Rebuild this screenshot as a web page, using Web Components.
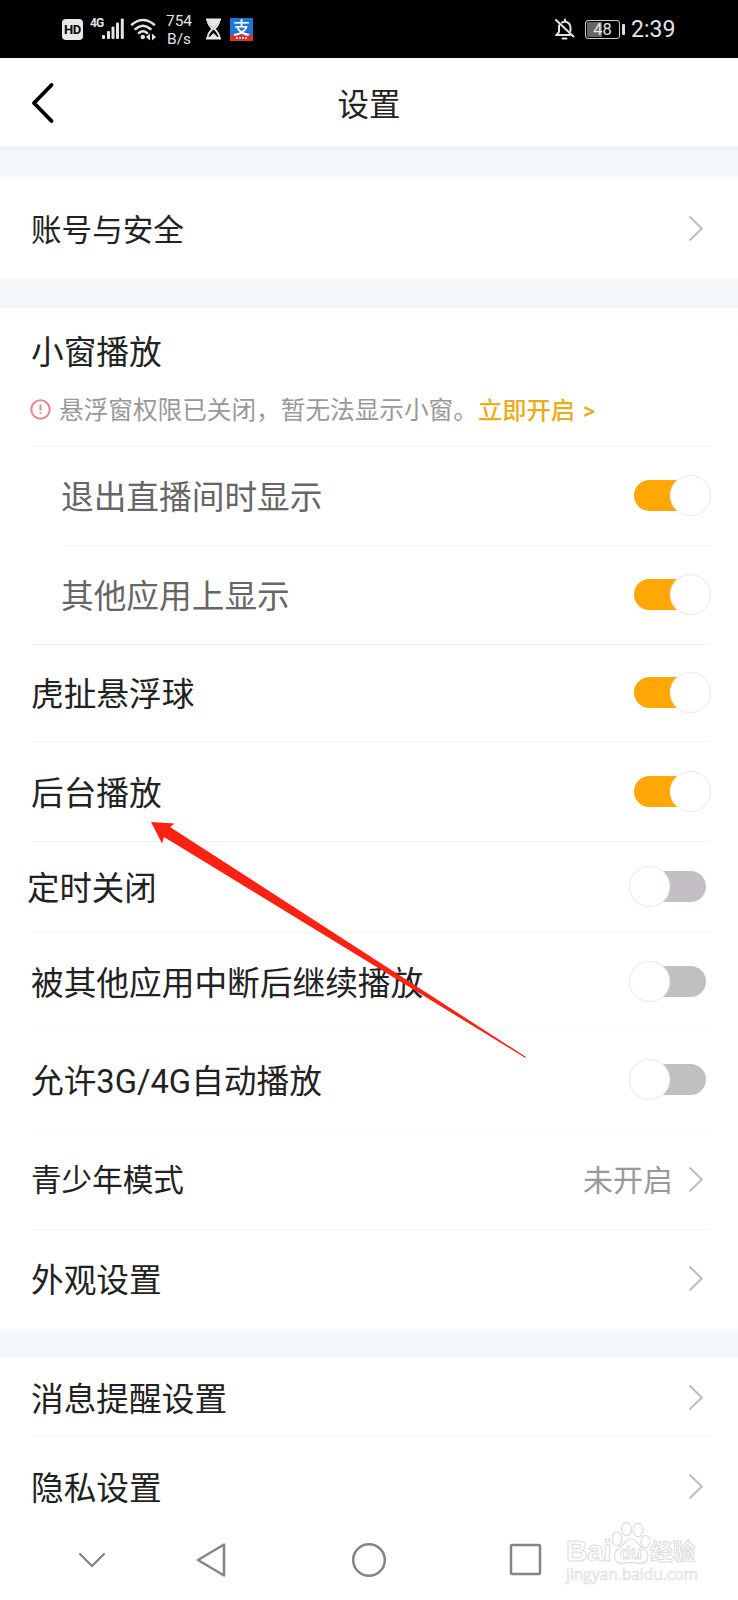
<!DOCTYPE html>
<html lang="zh-CN">
<head>
<meta charset="utf-8">
<title>设置</title>
<style>
html,body{margin:0;padding:0;background:#fff}
body{width:738px;height:1600px;overflow:hidden;font-family:Roboto,"Noto Sans CJK SC",sans-serif;color:#222}
</style>
</head>
<body>
<settings-screen></settings-screen>
<script>
const define = (name, html) => {
  const t = document.createElement('template');
  t.innerHTML = html;
  customElements.define(name, class extends HTMLElement {
    constructor() {
      super();
      this.attachShadow({mode: 'open'}).appendChild(t.content.cloneNode(true));
    }
  });
};

define('status-bar', `
<style>
:host{display:flex;align-items:center;height:58px;box-sizing:border-box;background:#000;color:#e4e4e4;padding:0 61px 0 62px}
svg{display:block;flex:none}
.hd{width:21px;height:21px;border-radius:4px;background:#e8e8e8;color:#000;font:700 13px/21px Roboto,sans-serif;text-align:center;letter-spacing:-.3px}
.net{display:flex;align-items:flex-start;margin-left:7px;height:22px}
.g{font:700 12px/11px "Liberation Sans Narrow",Roboto,sans-serif;width:12px;display:block;letter-spacing:-1px}
.rate{margin-left:8px;font:400 15.500px/18px Roboto,sans-serif;width:28px;text-align:center;padding-top:1px}
.rate div{height:18px;white-space:nowrap}
.sp{flex:1}
.pay{width:23px;height:23px;margin-left:8px;background:linear-gradient(#1b77d8 0 17px,#d8332f 17px);color:#fff;text-align:center}
.pay b{display:block;font:500 17px/17px "Noto Sans CJK SC",sans-serif;height:17px}
.pay i{display:block;width:11px;height:2px;margin:2px auto 0;background:repeating-linear-gradient(90deg,#f5c8c6 0 2px,#d8332f 2px 3px)}
.bat{display:flex;align-items:center;margin-left:10px}
.cell{width:33px;height:17px;border:1px solid #cfcfcf;border-radius:3px;box-shadow:inset 0 0 0 1px #000;background:linear-gradient(90deg,#666 0 16px,#000 16px);font:400 16.500px/17px Roboto,sans-serif;text-align:center}
.nub{width:3px;height:11px;background:#ddd;border-radius:1px;margin-left:2px}
.time{font:400 23px/30px Roboto,sans-serif;margin-left:6px;width:46px;white-space:nowrap;padding-top:2px}
</style>
<div class="hd">HD</div>
<div class="net"><span class="g">4G</span>
<svg width="22" height="22" viewBox="0 0 22 22" fill="#e4e4e4"><rect x="0" y="17" width="3" height="4" rx="1"/><rect x="5" y="13" width="3" height="8" rx="1"/><rect x="9.5" y="8.500" width="3" height="12.500" rx="1"/><rect x="14" y="4.500" width="3" height="16.500" rx="1"/><rect x="18.800" y="0.500" width="3" height="20.500" rx="1"/></svg></div>
<svg width="27" height="24" viewBox="0 0 27 24" style="margin-left:6px" fill="none" stroke="#e4e4e4" stroke-width="2.500" stroke-linecap="round"><path d="M2 7.500Q13 -1.500 24 7.500M5.500 12Q13 5.500 20.500 12M9 16Q13 12.500 17 16"/><circle cx="12.800" cy="20" r="2.200" fill="#e4e4e4" stroke="none"/><path d="M20 16.500v7l-4-3.500zM22 16.500v7l4-3.500z" fill="#e4e4e4" stroke="none"/></svg>
<div class="rate"><div>754</div><div>B/s</div></div>
<svg width="17" height="22" viewBox="0 0 17 22" style="margin-left:12px"><path d="M1 1.500H16M1 20.500H16" stroke="#e8e8e8" stroke-width="2"/><path d="M2.500 2H14.500Q14 7 9.500 11Q14 15 14.500 20H2.500Q3 15 7.500 11Q3 7 2.500 2Z" fill="none" stroke="#e8e8e8" stroke-width="1.800"/><path d="M3 3H14L12 7L8.500 11L5 7ZM3.500 20L8.500 15L13.500 20Z" fill="#e8e8e8"/></svg>
<div class="pay"><b>支</b><i></i></div>
<div class="sp"></div>
<svg width="20" height="22" viewBox="0 0 20 22" fill="none" stroke="#e4e4e4" stroke-width="2" stroke-linecap="round"><path d="M1 2L18.500 18.500M4 7.500V14L1.500 17H15M7 4.500L10 3.500Q15.500 4.500 15.500 10V13M10 1.500V3.500"/><path d="M7.500 20.500H11.500"/></svg>
<div class="bat"><div class="cell">48</div><div class="nub"></div></div>
<div class="time">2:39</div>`);

define('title-bar', `
<style>
:host{display:grid;grid-template-columns:60px 1fr 60px;align-items:center;height:88px;background:#fff}
svg{margin-left:30px;margin-top:2px}
h1{margin:0;padding-top:8px;font-size:31.500px;line-height:46px;text-align:center;font-weight:400}
</style>
<svg width="26" height="42" viewBox="0 0 26 42" fill="none" stroke="#000" stroke-width="3.900" stroke-linecap="round" stroke-linejoin="round"><path d="M21.500 3L4 21L21.500 39"/></svg>
<h1><slot></slot></h1>`);

define('section-gap', `
<style>
:host{display:block;height:31px;background:linear-gradient(#fff,#f7f7f7 3px,#f6f7f8 8px,#f3f7fa 12px)}
:host([first]){height:34px;background:linear-gradient(#fff 0,#eee 1px,#f5f5f5 3px,#f3f7fa 6px 28px,#f8f9fb 32px,#fff)}
</style>`);

define('go-chevron', `
<style>:host{display:block;width:16px;height:27px}svg{display:block}</style>
<svg width="16" height="27" viewBox="0 0 16 27" fill="none" stroke="#bdbdbd" stroke-width="2"><path d="M1.500 1.500L13.800 13.500L1.500 25.500"/></svg>`);

define('toggle-switch', `
<style>
:host{display:block;position:relative;width:82px;height:41px;--track:#ffa805}
:host([off]){--track:#c0c0c1}
.track{width:72px;height:31px;margin:5px;border-radius:16px;background:var(--track)}
.thumb{position:absolute;top:0;left:41px;box-sizing:border-box;width:41px;height:41px;border-radius:50%;background:#fff;border:1px solid #ececed;box-shadow:0 0 1px #eee}
:host([off]) .thumb{left:0}
.wrap{display:flow-root}
</style>
<div class="wrap"><div class="track"></div></div><div class="thumb"></div>`);

define('setting-row', `
<style>
:host{display:flex;flex-direction:column;height:var(--h,99px);font-size:var(--fs,32.700px);color:var(--ink,#222)}
.line{flex:1;display:flex;align-items:center;padding:0 34px 0 var(--x,31px);line-height:48px;white-space:nowrap}
.label{flex:1;padding-top:var(--dy,5px)}
.rule{flex:none;height:1px;margin:0 27px 0 var(--rx,32px);background:var(--rule,#f1f1f1)}
:host([bare]) .rule{display:none}
:host([toggle]) .line{padding:0 27px 1px var(--x,31px)}
::slotted(span){color:#999;font-size:30px;margin-right:15px;padding-top:3px}
</style>
<div class="line"><div class="label"><slot></slot></div><slot name="end"></slot></div>
<div class="rule"></div>`);

define('popup-header', `
<style>
:host{display:block;height:139px;box-sizing:border-box;padding-top:25px;background:linear-gradient(#fcfeff,#fff 20px)}
.t{font-size:32.700px;line-height:40px;padding-left:31px}
.n{display:flex;align-items:center;height:40px;margin:16px 0 17px;padding-left:30px;font-size:24.650px;line-height:40px;color:#999;white-space:nowrap}
svg{flex:none;margin-right:8px}
.n slot,.n a{position:static}
.c{display:flex;padding-top:5px}
a{color:#e8ae1c;font-weight:500;font-size:24.300px}
a b{font-weight:500;margin-left:8px;font-size:23px}
.r{height:1px;margin:0 27px 0 33px;background:#f8f1f3}
</style>
<div class="t"><slot></slot></div>
<div class="n"><svg width="21" height="21" viewBox="0 0 21 21"><circle cx="10.500" cy="10.500" r="9.200" fill="none" stroke="#e58b8f" stroke-width="2.100"/><path d="M10.500 5.500V11.500M10.500 13.500V15" stroke="#e08a86" stroke-width="2"/></svg><div class="c"><slot name="notice"></slot><a>立即开启<b>&gt;</b></a></div></div>
<div class="r"></div>`);

define('nav-bar', `
<style>
:host{display:block;height:65px}
svg{display:block;flex:none}
.row{display:flex;align-items:center;height:49px;padding-left:77px}
</style>
<div class="row">
<svg width="30" height="18" viewBox="0 0 30 18" fill="none" stroke="#848484" stroke-width="2.300" stroke-linecap="round" stroke-linejoin="round"><path d="M3 3L15 15L27 3"/></svg>
<svg style="margin-left:88px" width="34" height="38" viewBox="0 0 34 38" fill="none" stroke="#848484" stroke-width="2.500" stroke-linejoin="round"><path d="M29 3.500V34.500L3 19Z"/></svg>
<svg style="margin-left:122px" width="36" height="36" viewBox="0 0 36 36" fill="none" stroke="#848484" stroke-width="2.500"><circle cx="18" cy="18" r="15.800"/></svg>
<svg style="margin-left:122px" width="33" height="33" viewBox="0 0 33 33" fill="none" stroke="#848484" stroke-width="2.500"><rect x="2" y="2" width="29" height="29" rx="1"/></svg>
</div>`);

define('pointer-arrow', `
<style>:host{position:absolute;left:145px;top:816px;pointer-events:none}svg{display:block}</style>
<svg width="386" height="246" viewBox="145 816 386 246"><path d="M151 822L174.500 823.500L170 827L526 1057L525.400 1058L164 837L162 843.500Z" fill="#fb2214"/></svg>`);

define('site-mark', `
<style>
:host{position:absolute;left:566px;top:1518px;width:140px;height:70px;color:#fff}
.top{display:flex;align-items:flex-end;height:46px;line-height:26px;-webkit-text-stroke:1px #dcdcdc}
.bai{font:700 30px/26px "Liberation Sans",sans-serif;width:46px;letter-spacing:-.5px}
.paw{position:relative;width:38px;height:45px}
.paw svg{display:block}
.paw span{position:absolute;left:8px;width:22px;top:24px;text-align:center;font:700 18px/20px "Liberation Sans",sans-serif}
.jy{font:700 22.500px/28px "Noto Sans CJK SC",sans-serif}
.url{margin-top:2px;font:400 15.500px/17px "Open Sans","Noto Sans",sans-serif;color:#fff;-webkit-text-stroke:.7px #dedede;white-space:nowrap}
</style>
<div class="top"><span class="bai">Bai</span><div class="paw"><svg width="38" height="45" viewBox="0 0 38 45" fill="none" stroke="#dcdcdc" stroke-width="1.200"><ellipse cx="5" cy="20" rx="4.800" ry="7"/><ellipse cx="14.500" cy="10" rx="5" ry="6.700"/><ellipse cx="26" cy="11" rx="5" ry="6.700"/><ellipse cx="33.500" cy="22.500" rx="4.500" ry="6"/><path d="M19 20C14 20 12 26 6 30C1 34 1 44 9 44.300C13 44.300 15 43.500 19 43.500C23 43.500 25 44.300 29 44.300C37 44 38 34 32 30C26 26 24 20 19 20Z"/></svg><span>du</span></div><span class="jy">经验</span></div>
<div class="url">jingyan.baidu.com</div>`);

define('settings-screen', `
<style>
:host{display:block;position:relative;width:738px;height:1600px;background:#fff;overflow:hidden}
.sub{--x:61px;--ink:#666}
.soft{--rule:#f6f6f6}
</style>
<status-bar></status-bar>
<title-bar>设置</title-bar>
<section-gap first></section-gap>
<setting-row bare style="--fs:30.600px;--h:97px;--dy:4px">账号与安全<go-chevron slot="end"></go-chevron></setting-row>
<section-gap></section-gap>
<popup-header>小窗播放<div slot="notice">悬浮窗权限已关闭，暂无法显示小窗。</div></popup-header>
<setting-row toggle class="sub" style="--rx:64px;--rule:#f8f0f2">退出直播间时显示<toggle-switch slot="end"></toggle-switch></setting-row>
<setting-row toggle class="sub">其他应用上显示<toggle-switch slot="end"></toggle-switch></setting-row>
<setting-row toggle class="soft" style="--h:97px">虎扯悬浮球<toggle-switch slot="end"></toggle-switch></setting-row>
<setting-row toggle style="--h:100px;--dy:6px">后台播放<toggle-switch slot="end"></toggle-switch></setting-row>
<setting-row toggle class="soft" style="--h:91px;--x:27px;--fs:32.400px">定时关闭<toggle-switch off slot="end" style="--track:#c3bfc4"></toggle-switch></setting-row>
<setting-row toggle class="soft" style="--h:98px">被其他应用中断后继续播放<toggle-switch off slot="end"></toggle-switch></setting-row>
<setting-row toggle class="soft">允许3G/4G自动播放<toggle-switch off slot="end"></toggle-switch></setting-row>
<setting-row class="soft" style="--h:100px;--fs:30.600px;--dy:3px">青少年模式<span slot="end">未开启</span><go-chevron slot="end"></go-chevron></setting-row>
<setting-row bare style="--h:97px;--dy:4px">外观设置<go-chevron slot="end"></go-chevron></setting-row>
<section-gap></section-gap>
<setting-row class="soft" style="--h:79px">消息提醒设置<go-chevron slot="end"></go-chevron></setting-row>
<setting-row bare style="--h:98px">隐私设置<go-chevron slot="end"></go-chevron></setting-row>
<nav-bar></nav-bar>
<pointer-arrow></pointer-arrow>
<site-mark></site-mark>`);
</script>
</body>
</html>
